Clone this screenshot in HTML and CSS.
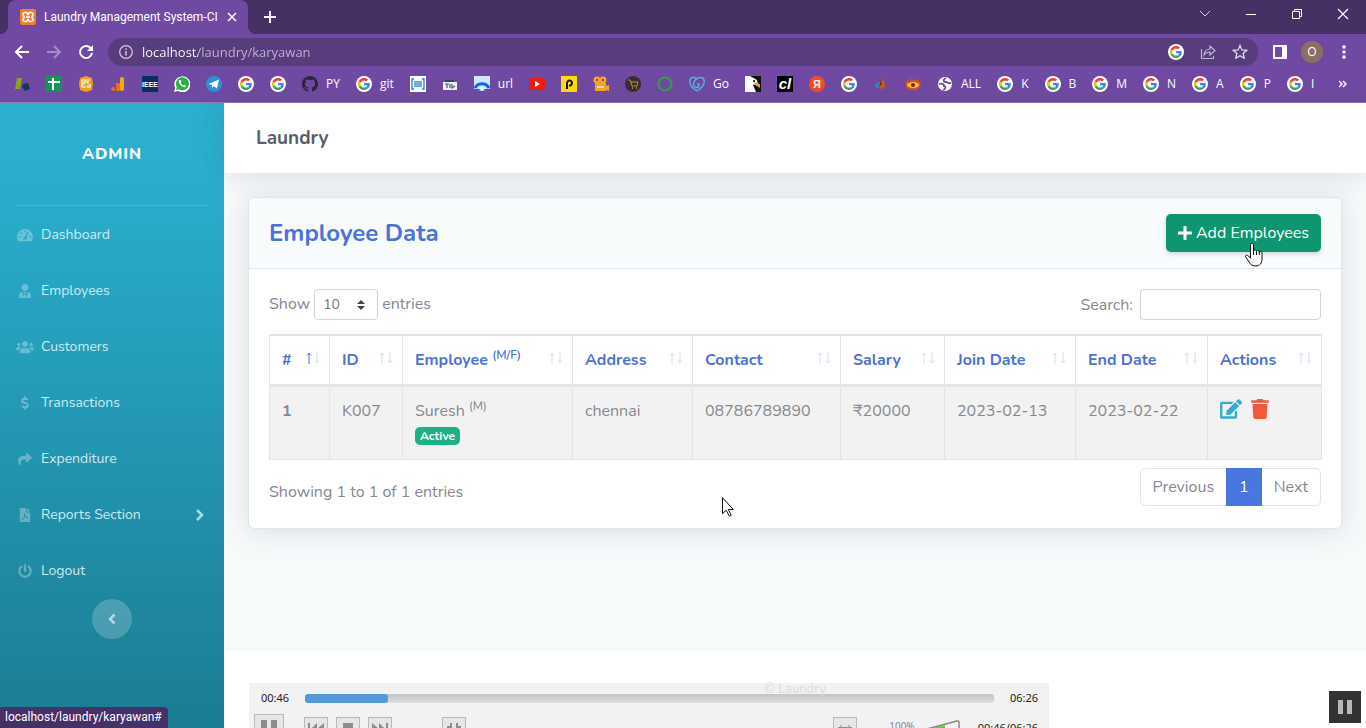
FILE: index.html
```html
<!DOCTYPE html>
<html lang="en">
<head>
    <meta charset="UTF-8">
    <meta name="viewport" content="width=device-width, initial-scale=1.0">
    <title>Laundry Management System-CI</title>
    <link rel="stylesheet" href="styles.css">
</head>
<body>
    <svg class="sprite" aria-hidden="true">
        <symbol id="google" viewBox="0 0 48 48">
            <circle cx="24" cy="24" r="24" fill="#fff"/>
            <g transform="translate(6 6) scale(.75)">
                <path fill="#ea4335" d="M24 9.5c3.54 0 6.71 1.22 9.21 3.6l6.85-6.85C35.9 2.38 30.47 0 24 0 14.62 0 6.51 5.38 2.56 13.22l7.98 6.19C12.43 13.72 17.74 9.5 24 9.5z"/>
                <path fill="#4285f4" d="M46.98 24.55c0-1.57-.15-3.09-.38-4.55H24v9.02h12.94c-.58 2.96-2.26 5.48-4.78 7.18l7.73 6c4.51-4.18 7.09-10.36 7.09-17.65z"/>
                <path fill="#fbbc05" d="M10.53 28.59c-.48-1.45-.76-2.99-.76-4.59s.27-3.14.76-4.59l-7.98-6.19C.92 16.46 0 20.12 0 24s.92 7.54 2.56 10.78l7.97-6.19z"/>
                <path fill="#34a853" d="M24 48c6.48 0 11.93-2.13 15.89-5.81l-7.73-6c-2.15 1.45-4.92 2.3-8.16 2.3-6.26 0-11.57-4.22-13.47-9.91l-7.98 6.19C6.51 42.62 14.62 48 24 48z"/>
            </g>
        </symbol>
        <symbol id="arrow-up" viewBox="0 0 6 12">
            <path d="M3 12V1M1 3.5L3 1l2 2.500" fill="none" stroke="currentColor"/>
        </symbol>
        <symbol id="arrow-down" viewBox="0 0 6 12">
            <path d="M3 0v11M1 8.500L3 11l2-2.500" fill="none" stroke="currentColor"/>
        </symbol>
    </svg>

    <header class="browser">
        <div class="tab-strip">
            <div class="tab">
                <svg class="icon16" viewBox="0 0 16 16"><rect width="16" height="16" rx="2" fill="#f37b27"/><path d="M5 3.500h1.500L8 5.500l1.500-2H11a2 2 0 0 1 2 2.500l-1.200 2 1.200 2a2 2 0 0 1-2 2.500H9.500L8 10.500l-1.500 2H5A2 2 0 0 1 3 10l1.200-2L3 6a2 2 0 0 1 2-2.500zM6 8h4" fill="none" stroke="#fff" stroke-width="1.700"/></svg>
                <span class="tab-title">Laundry Management System-CI</span>
                <button type="button" aria-label="Close tab"><svg width="10" height="10" viewBox="0 0 10 10"><path d="M1 1l8 8M9 1L1 9" stroke="#fff" stroke-width="1.500"/></svg></button>
            </div>
            <button type="button" class="new-tab" aria-label="New tab"><svg width="12" height="12" viewBox="0 0 12 12"><path d="M6 0v12M0 6h12" stroke="#fff" stroke-width="2"/></svg></button>
            <div class="window-buttons">
                <button type="button" aria-label="Search tabs"><svg width="12" height="12" viewBox="0 0 12 12"><path d="M1 3l5 5 5-5" fill="none" stroke="#d6cbe3"/></svg></button>
                <button type="button" aria-label="Minimize"><svg width="12" height="12" viewBox="0 0 12 12"><path d="M1 6.500h10" stroke="#fff"/></svg></button>
                <button type="button" aria-label="Restore"><svg width="12" height="12" viewBox="0 0 12 12"><path d="M1.500 3.500h7v7h-7zM3.500 3.500v-2h7v7h-2" fill="none" stroke="#fff"/></svg></button>
                <button type="button" aria-label="Close"><svg width="12" height="12" viewBox="0 0 12 12"><path d="M1 1l10 10M11 1L1 11" stroke="#fff" stroke-width="1.200"/></svg></button>
            </div>
        </div>

        <div class="toolbar">
            <button type="button" aria-label="Back"><svg class="icon16" viewBox="0 0 16 16"><path d="M15 8H2M8 2L2 8l6 6" fill="none" stroke="#fff" stroke-width="2"/></svg></button>
            <button type="button" aria-label="Forward"><svg class="icon16" viewBox="0 0 16 16"><path d="M1 8h13M8 2l6 6-6 6" fill="none" stroke="#a78cc9" stroke-width="2"/></svg></button>
            <button type="button" aria-label="Reload"><svg class="icon16" viewBox="0 0 16 16"><path d="M13 4.500A6 6 0 1 0 14 9" fill="none" stroke="#fff" stroke-width="2"/><path d="M15 1v6H9z" fill="#fff"/></svg></button>
            <div class="address-bar">
                <svg width="14" height="14" viewBox="0 0 14 14"><circle cx="7" cy="7" r="6.300" fill="none" stroke="#cfc4dc" stroke-width="1.300"/><path d="M7 6v4.500M7 3.300v1.500" stroke="#cfc4dc" stroke-width="1.500"/></svg>
                <input type="text" value="localhost/laundry/karyawan" aria-label="Address">
                <svg class="icon16"><use href="#google"/></svg>
                <svg class="icon16" viewBox="0 0 16 16"><path d="M1.500 5v9.500h12V12M4 11c.5-4 3-6 6-6V2l5 4.500-5 4.500V8c-3 0-4.500 1-6 3z" fill="none" stroke="#c3b4d5" stroke-width="1.200"/></svg>
                <svg class="icon16" viewBox="0 0 16 16"><path d="M8 1.500l1.900 4.400 4.800.4-3.600 3.200 1.100 4.700L8 11.700l-4.200 2.500 1.100-4.700L1.300 6.300l4.800-.4z" fill="none" stroke="#e3daec" stroke-width="1.300"/></svg>
            </div>
            <div class="toolbar-end">
                <button type="button" aria-label="Side panel"><svg width="14" height="14" viewBox="0 0 14 14"><path d="M0 0h14v14H0zM2 2v10h7V2z" fill="#fff" fill-rule="evenodd"/></svg></button>
                <button type="button" class="profile">O</button>
                <button type="button" aria-label="Menu"><svg width="4" height="14" viewBox="0 0 4 14"><path d="M.5.500h3v3h-3zM.5 5.500h3v3h-3zM.5 10.500h3v3h-3z" fill="#fff"/></svg></button>
            </div>
        </div>

        <nav class="bookmarks" aria-label="Bookmarks">
            <a href="#" aria-label="Bookmark"><svg class="icon16" viewBox="0 0 16 16"><path d="M3 2h5L6 13H1z" fill="#8aa51a"/><path d="M9 8l5-1 2 6-5 2-3-4z" fill="#12385c"/></svg></a>
            <a href="#" aria-label="Sheets"><svg class="icon16" viewBox="0 0 16 16"><path d="M0 0h16v16H0z" fill="#16935a"/><path d="M7 2v12M2 6h12" stroke="#fff" stroke-width="2"/></svg></a>
            <a href="#" aria-label="Analytics"><svg class="icon16" viewBox="0 0 16 16"><path d="M8 0l6 2 1 6-1 6-6 2-6-2-1-6 1-6z" fill="#f0a01e"/><path d="M11 5V4H4v7h4M6 9V6h4v2M10 12V9M12 12V8" fill="none" stroke="#fff" stroke-width="1.200"/></svg></a>
            <a href="#" aria-label="Statistics"><svg class="icon16" viewBox="0 0 16 16"><circle cx="3" cy="13" r="2" fill="#e8710a"/><rect x="6" y="7" width="4" height="8" rx="1" fill="#e8710a"/><rect x="10" y="1" width="4" height="14" rx="2" fill="#f9ab00"/></svg></a>
            <a href="#" aria-label="IEEE"><svg class="icon16" viewBox="0 0 16 16"><rect width="16" height="16" fill="#092d63"/><text x="8" y="11" text-anchor="middle" class="logo-ieee">IEEE</text></svg></a>
            <a href="#" aria-label="WhatsApp"><svg class="icon16" viewBox="0 0 16 16"><path d="M0 16l1.300-4A8 8 0 1 1 4 15z" fill="#fff"/><path d="M2 14l.8-3A6.500 6.500 0 1 1 5 13.300z" fill="#25b33f"/><path d="M5.200 4c-1 .8-.8 2 .4 3.800 1.300 2 3.300 3.500 4.700 3.500 1 0 2-.9 1.700-1.800L10.300 8.600l-1 1c-1-.4-2.200-1.500-2.600-2.600l.8-.9-.8-2z" fill="#fff"/></svg></a>
            <a href="#" aria-label="Telegram"><svg class="icon16" viewBox="0 0 16 16"><circle cx="8" cy="8" r="8" fill="#2f8ee0"/><path d="M2.500 8L13 3.500l-2 9-3.200-2.200-1.600 1.500-.4-2.800z" fill="#fff"/></svg></a>
            <a href="#" aria-label="Google"><svg class="icon16"><use href="#google"/></svg></a>
            <a href="#" aria-label="Google"><svg class="icon16"><use href="#google"/></svg></a>
            <a href="#"><svg class="icon16" viewBox="0 0 16 16"><path fill="#2a2340" d="M8 0C3.580 0 0 3.580 0 8c0 3.540 2.290 6.530 5.470 7.590.4.070.55-.17.55-.38v-1.490c-2.010.37-2.530-.49-2.690-.94-.09-.23-.48-.94-.82-1.130-.28-.15-.68-.52-.01-.53.63-.01 1.080.58 1.230.82.72 1.210 1.870.87 2.330.66.070-.52.280-.87.510-1.070-1.780-.2-3.640-.89-3.640-3.950 0-.87.310-1.590.820-2.150-.08-.2-.36-1.020.08-2.120 0 0 .67-.21 2.200.82a7.600 7.600 0 0 1 4 0c1.530-1.040 2.200-.82 2.200-.82.44 1.100.160 1.920.080 2.120.51.560.82 1.270.82 2.150 0 3.070-1.870 3.750-3.650 3.950.29.250.54.730.54 1.480v2.200c0 .21.150.46.550.38A8 8 0 0 0 8 0z"/></svg>PY</a>
            <a href="#"><svg class="icon16"><use href="#google"/></svg>git</a>
            <a href="#" aria-label="Barcode"><svg class="icon16" viewBox="0 0 16 16"><rect width="16" height="16" fill="#fff"/><path d="M4 3H2v10h2M12 3h2v10h-2M5 5v6M7 5v6M9 5v6M11 5v6" fill="none" stroke="#2680d4" stroke-width="1.300"/></svg></a>
            <a href="#" aria-label="Printer"><svg class="icon16" viewBox="0 0 16 16"><path d="M3 4h9v4H3z" fill="#35465f"/><path d="M1 6h14v8H1z" fill="#eef0f4"/><path d="M5 8v4M3 8h4M8 12V8M10 8v4l3-2" fill="none" stroke="#44617e" stroke-width="1.200"/></svg></a>
            <a href="#"><svg class="icon16" viewBox="0 0 16 16"><path d="M0 0h16v13H0z" fill="#cfe6fb"/><path d="M1 12a8 8 0 0 1 14 0" fill="none" stroke="#1769d8" stroke-width="3"/><path d="M4 15a5 5 0 0 1 8 0z" fill="#4b9af4"/><circle cx="8" cy="13" r="2" fill="#fff"/></svg>url</a>
            <a href="#" aria-label="YouTube"><svg class="icon16" viewBox="0 0 16 16"><rect y="2" width="16" height="12" rx="3" fill="#f51a0b"/><path d="M6 5l5 3-5 3z" fill="#fff"/></svg></a>
            <a href="#" aria-label="P"><svg class="icon16" viewBox="0 0 16 16"><path d="M0 0h16v16H0z" fill="#fd0"/><path d="M6 13V7a2.500 2.500 0 1 1 2 2.500" fill="none" stroke="#111" stroke-width="2"/></svg></a>
            <a href="#" aria-label="Camera"><svg class="icon16" viewBox="0 0 16 16"><circle cx="4" cy="4" r="3.500" fill="#f6a623"/><circle cx="10" cy="4" r="3.500" fill="#f6a623"/><path d="M2 7h11v3l3-1v6l-3-1v1H2z" fill="#f6a623"/><path d="M3 4h2M9 4h2" stroke="#704a98" stroke-width="2"/><path d="M4 11h7" stroke="#fbe3bd" stroke-width="2"/></svg></a>
            <a href="#" aria-label="Shop"><svg class="icon16" viewBox="0 0 16 16"><circle cx="8" cy="8" r="8" fill="#35302f"/><path d="M3 4h2l2 6h5l1-4H6" fill="none" stroke="#d68b22"/><path d="M7 12h1M11 12h1" stroke="#d68b22" stroke-width="1.500"/></svg></a>
            <a href="#" aria-label="Ring"><svg class="icon16" viewBox="0 0 16 16"><circle cx="8" cy="8" r="6.500" fill="none" stroke="#389b48" stroke-width="2.200"/></svg></a>
            <a href="#"><svg class="icon16" viewBox="0 0 16 16"><path d="M8 15C3 12 0 8 1 4s6-3 7 0M8 15c5-3 8-7 7-11s-8-3-10 2 3 7 5 4V8H8" fill="none" stroke="#57b7e6" stroke-width="1.400"/></svg>Go</a>
            <a href="#" aria-label="Eagle"><svg class="icon16" viewBox="0 0 16 16"><path d="M0 0h16v16H0z" fill="#111"/><path d="M0 0h5l7 4 1 4-5 1 3 7H0z" fill="#fff"/><path d="M9 6l6 2v4l-5-3z" fill="#e6a13b"/><circle cx="9" cy="5" r="1"/></svg></a>
            <a href="#" aria-label="cl"><svg class="icon16" viewBox="0 0 16 16"><path d="M0 0h16v16H0z"/><text x="8" y="13" text-anchor="middle" class="logo-cl">cl</text></svg></a>
            <a href="#" aria-label="Yandex"><svg class="icon16" viewBox="0 0 16 16"><circle cx="8" cy="8" r="8" fill="#f8492b"/><text x="8" y="12" text-anchor="middle" class="logo-ya">Я</text></svg></a>
            <a href="#" aria-label="Google"><svg class="icon16"><use href="#google"/></svg></a>
            <a href="#" aria-label="Matlab"><svg class="icon16" viewBox="0 0 16 16"><path d="M1 9l4-2 3-2-2 6-2 1z" fill="#3f80c0"/><path d="M9 2c2 1 3 7 4 11l-3-2-3 3-1-3z" fill="#d95319"/><path d="M9 2l-1 7-2 2z" fill="#4b2020"/></svg></a>
            <a href="#" aria-label="Eye"><svg class="icon16" viewBox="0 0 16 16"><path d="M0 5l2 1V3l3 2 1-3 2 3 2-3 1 3 3-2v3l2-1-1 6-4 3H5l-4-3z" fill="#e64a19"/><ellipse cx="8" cy="9" rx="6" ry="3" fill="#ffc928"/><circle cx="8" cy="9" r="2" fill="#5b2a1a"/></svg></a>
            <a href="#"><svg class="icon16" viewBox="0 0 16 16"><circle cx="8" cy="8" r="7" fill="#fff"/><path d="M9 2c-3 1-3 4 0 4 2 0 2 2 5 1M2 8c3-1 5 0 5 2 2 0 2 3-1 4" fill="none" stroke="#704a98" stroke-width="1.800"/></svg>ALL</a>
            <a href="#"><svg class="icon16"><use href="#google"/></svg>K</a>
            <a href="#"><svg class="icon16"><use href="#google"/></svg>B</a>
            <a href="#"><svg class="icon16"><use href="#google"/></svg>M</a>
            <a href="#"><svg class="icon16"><use href="#google"/></svg>N</a>
            <a href="#"><svg class="icon16"><use href="#google"/></svg>A</a>
            <a href="#"><svg class="icon16"><use href="#google"/></svg>P</a>
            <a href="#"><svg class="icon16"><use href="#google"/></svg>I</a>
            <button type="button" class="more" aria-label="More bookmarks"><svg width="8" height="8" viewBox="0 0 8 8"><path d="M0 1l3 3-3 3M4 1l3 3-3 3" fill="none" stroke="#fff" stroke-width="1.500"/></svg></button>
        </nav>
    </header>

    <div class="wrapper">
        <aside class="sidebar">
            <a class="brand" href="#">ADMIN</a>
            <nav class="menu">
                <a href="#"><svg viewBox="0 0 576 512"><path fill-rule="evenodd" d="M288 32C129 32 0 161 0 320c0 53 14 102 39 145 6 10 16 15 27 15h443c12 0 22-5 28-15 25-43 39-92 39-145 0-159-129-288-288-288zM256 96h64v48h-64zM64 304h64v56H64zM116 164h60v54h-60zM448 304h64v56h-64zM365 138l42 16-64 192c18 24 13 46 2 70H231c-24-54 0-91 62-96z"/></svg>Dashboard</a>
                <a href="#"><svg viewBox="0 0 448 512"><path d="M224 256c70.700 0 128-57.300 128-128S294.700 0 224 0 96 57.300 96 128s57.300 128 128 128zm95.800 32.600L272 480l-32-136 32-56h-96l32 56-32 136-47.800-191.400C56.900 292 0 350.300 0 422.400V464c0 26.500 21.500 48 48 48h352c26.500 0 48-21.500 48-48v-41.600c0-72.100-56.900-130.400-128.200-133.800z"/></svg>Employees</a>
                <a href="#"><svg viewBox="0 0 640 512"><path d="M96 224c35.300 0 64-28.700 64-64s-28.700-64-64-64-64 28.700-64 64 28.700 64 64 64zm448 0c35.300 0 64-28.700 64-64s-28.700-64-64-64-64 28.700-64 64 28.700 64 64 64zm32 32h-64c-17.600 0-33.500 7.100-45.100 18.600 40.300 22.100 68.900 62 75.100 109.400h66c17.700 0 32-14.300 32-32v-32c0-35.300-28.700-64-64-64zm-256 0c61.900 0 112-50.100 112-112S381.900 32 320 32 208 82.100 208 144s50.100 112 112 112zm76.800 32h-8.300c-20.800 10-43.900 16-68.500 16s-47.600-6-68.500-16h-8.300C179.600 288 128 339.600 128 403.200V432c0 26.500 21.500 48 48 48h288c26.500 0 48-21.500 48-48v-28.800c0-63.600-51.600-115.200-115.200-115.200zm-223.700-13.400C161.500 263.100 145.600 256 128 256H64c-35.300 0-64 28.700-64 64v32c0 17.700 14.300 32 32 32h65.900c6.300-47.400 34.900-87.300 75.200-109.400z"/></svg>Customers</a>
                <a href="#"><svg viewBox="0 0 288 512"><path d="M209.200 233.400l-108-31.600C88.700 198.200 80 186.500 80 173.500c0-16.300 13.200-29.500 29.500-29.500h66.300c12.200 0 24.200 3.700 34.200 10.500 6.100 4.100 14.300 3.100 19.500-2l34.800-34c7.100-6.900 6.100-18.400-1.800-24.500C238 74.800 207.400 64.100 176 64V16c0-8.800-7.200-16-16-16h-32c-8.800 0-16 7.200-16 16v48h-2.500C45.800 64-5.400 118.700.5 183.600c4.200 46.100 39.400 83.600 83.800 96.600l102.500 30c12.500 3.700 21.200 15.300 21.200 28.300 0 16.300-13.200 29.500-29.500 29.500h-66.300C100 368 88 364.300 78 357.500c-6.100-4.100-14.300-3.100-19.500 2l-34.800 34c-7.100 6.900-6.100 18.400 1.800 24.500 24.500 19.200 55.100 29.900 86.500 30v48c0 8.800 7.200 16 16 16h32c8.800 0 16-7.200 16-16v-48.200c46.600-.9 90.300-28.600 105.700-72.700 21.500-61.600-14.600-124.800-72.500-141.700z"/></svg>Transactions</a>
                <a href="#"><svg viewBox="0 0 512 512"><path d="M503.700 189.800L327.700 37.900C312.300 24.500 288 35.300 288 56v80C127.400 137.900 0 170.100 0 322.300c0 61.500 39.600 122.300 83.300 154.200 13.700 9.900 33.100-2.600 28.100-18.700C66.100 312.800 132.900 274.300 288 272.100V360c0 20.700 24.300 31.500 39.700 18.200l176-152c11.100-9.600 11.100-26.800 0-36.400z"/></svg>Expenditure</a>
                <a href="#"><svg viewBox="0 0 384 512"><path fill-rule="evenodd" d="M24 0h200v136c0 13 11 24 24 24h136v328c0 13-11 24-24 24H24c-13 0-24-11-24-24V24C0 11 11 0 24 0zm232 0h6l122 122v6H256zM176 190c-20 0-26 48-10 92-17 44-35 79-58 98-54 24-55 62-23 57 25-4 43-38 62-71 25-13 53-20 83-24 27 19 69 30 79 11 10-21-30-36-69-30-21-13-35-31-46-56 10-33 9-77-18-77zm4 120c9 14 18 22 29 31-17 2-31 6-48 12z"/></svg>Reports Section<svg class="angle" viewBox="0 0 8 12"><path d="M1 1l5 5-5 5" fill="none" stroke="#a9dbe6" stroke-width="2.500"/></svg></a>
                <a href="#"><svg viewBox="0 0 512 512"><path d="M400 54.100c63 45 104 118.600 104 201.900 0 136.800-110.800 247.700-247.500 248C120 504.300 8.200 393 8 256.400 7.900 173.100 48.900 99.300 111.800 54.200c11.700-8.300 28-4.800 35 7.700L162.600 90c5.900 10.500 3.100 23.800-6.600 31-41.500 30.800-68 79.600-68 134.900-.1 92.300 74.500 168.100 168 168.100 91.600 0 168.600-74.200 168-169.100-.3-51.800-24.700-101.800-68.100-134-9.700-7.200-12.400-20.500-6.500-30.900l15.800-28.100c7-12.400 23.200-16.100 34.800-7.800zM296 264V24c0-13.300-10.700-24-24-24h-32c-13.300 0-24 10.700-24 24v240c0 13.300 10.700 24 24 24h32c13.300 0 24-10.700 24-24z"/></svg>Logout</a>
            </nav>
            <button type="button" class="sidebar-toggle" aria-label="Collapse sidebar"><svg width="8" height="12" viewBox="0 0 8 12"><path d="M6.500 1.500L2 6l4.500 4.500" fill="none" stroke="#b4d8e0" stroke-width="2.500"/></svg></button>
        </aside>

        <div class="content-wrapper">
            <header class="topbar">
                <h1>Laundry</h1>
            </header>

            <main class="content">
                <section class="card">
                    <div class="card-header">
                        <h2>Employee Data</h2>
                        <button type="button" class="add-button"><svg width="14" height="14" viewBox="0 0 14 14"><path d="M7 1v12M1 7h12" stroke="#fff" stroke-width="3" stroke-linecap="round"/></svg>Add Employees</button>
                    </div>
                    <div class="card-body">
                        <div class="table-tools">
                            <label class="length">Show
                                <select name="length">
                                    <option>10</option>
                                    <option>25</option>
                                    <option>50</option>
                                </select>
                                entries
                            </label>
                            <label class="search">Search: <input type="search" name="search"></label>
                        </div>

                        <table>
                            <colgroup>
                                <col class="col-no"><col class="col-id"><col class="col-employee"><col class="col-address"><col class="col-contact"><col class="col-salary"><col class="col-join"><col class="col-end"><col class="col-actions">
                            </colgroup>
                            <thead>
                                <tr>
                                    <th><div>#<span class="sort sorted"><svg><use href="#arrow-up"/></svg><svg><use href="#arrow-down"/></svg></span></div></th>
                                    <th><div>ID<span class="sort"><svg><use href="#arrow-up"/></svg><svg><use href="#arrow-down"/></svg></span></div></th>
                                    <th><div><span>Employee <sup>(M/F)</sup></span><span class="sort"><svg><use href="#arrow-up"/></svg><svg><use href="#arrow-down"/></svg></span></div></th>
                                    <th><div>Address<span class="sort"><svg><use href="#arrow-up"/></svg><svg><use href="#arrow-down"/></svg></span></div></th>
                                    <th><div>Contact<span class="sort"><svg><use href="#arrow-up"/></svg><svg><use href="#arrow-down"/></svg></span></div></th>
                                    <th><div>Salary<span class="sort"><svg><use href="#arrow-up"/></svg><svg><use href="#arrow-down"/></svg></span></div></th>
                                    <th><div>Join Date<span class="sort"><svg><use href="#arrow-up"/></svg><svg><use href="#arrow-down"/></svg></span></div></th>
                                    <th><div>End Date<span class="sort"><svg><use href="#arrow-up"/></svg><svg><use href="#arrow-down"/></svg></span></div></th>
                                    <th><div>Actions<span class="sort"><svg><use href="#arrow-up"/></svg><svg><use href="#arrow-down"/></svg></span></div></th>
                                </tr>
                            </thead>
                            <tbody>
                                <tr>
                                    <td><b>1</b></td>
                                    <td>K007</td>
                                    <td>Suresh <sup>(M)</sup><br><span class="badge">Active</span></td>
                                    <td>chennai</td>
                                    <td>08786789890</td>
                                    <td>₹20000</td>
                                    <td>2023-02-13</td>
                                    <td>2023-02-22</td>
                                    <td>
                                        <div class="actions">
                                            <a href="#" class="edit" aria-label="Edit"><svg width="22" height="20" viewBox="0 0 576 512"><path d="M402.600 83.200l90.200 90.200c3.800 3.800 3.800 10 0 13.800L274.400 405.600l-92.800 10.300c-12.400 1.400-22.900-9.100-21.500-21.500l10.300-92.800L388.800 83.200c3.800-3.800 10-3.800 13.800 0zm162-22.900l-48.800-48.800c-15.200-15.200-39.900-15.200-55.200 0l-35.400 35.400c-3.800 3.800-3.800 10 0 13.800l90.200 90.200c3.800 3.800 10 3.800 13.800 0l35.400-35.400c15.200-15.300 15.200-40 0-55.200zM384 346.200V448H64V128h229.800c3.200 0 6.200-1.300 8.500-3.500l40-40c7.600-7.600 2.200-20.500-8.500-20.500H48C21.500 64 0 85.500 0 112v352c0 26.500 21.500 48 48 48h352c26.500 0 48-21.500 48-48V306.200c0-10.700-12.900-16-20.500-8.500l-40 40c-2.200 2.300-3.500 5.300-3.500 8.500z"/></svg></a>
                                            <a href="#" class="delete" aria-label="Delete"><svg width="18" height="20" viewBox="0 0 448 512"><path d="M432 32H312l-9.400-18.700A24 24 0 0 0 281.100 0H166.800a23.700 23.700 0 0 0-21.400 13.300L136 32H16A16 16 0 0 0 0 48v32a16 16 0 0 0 16 16h416a16 16 0 0 0 16-16V48a16 16 0 0 0-16-16zM53.200 467a48 48 0 0 0 47.900 45h245.800a48 48 0 0 0 47.900-45L416 128H32z"/></svg></a>
                                        </div>
                                    </td>
                                </tr>
                            </tbody>
                        </table>

                        <div class="table-footer">
                            <p>Showing 1 to 1 of 1 entries</p>
                            <nav class="pagination" aria-label="Pages">
                                <a href="#">Previous</a>
                                <a href="#" class="active">1</a>
                                <a href="#">Next</a>
                            </nav>
                        </div>
                    </div>
                </section>
            </main>

            <footer class="footer">
                <span>© Laundry</span>
            </footer>

            <!-- video player controls floating over the page -->
            <div class="player">
                <div class="player-time">
                    <span>00:46</span>
                    <div class="track"><div class="track-fill"></div></div>
                    <span>06:26</span>
                </div>
                <div class="player-buttons">
                    <button type="button" class="play" aria-label="Pause"><svg width="16" height="16" viewBox="0 0 16 16"><path d="M0 0h6v16H0zM10 0h6v16h-6z"/></svg></button>
                    <button type="button" aria-label="Previous"><svg width="16" height="12" viewBox="0 0 16 12"><path d="M0 0h2v12H0zM9 0v12L3 6zM16 0v12l-7-6z"/></svg></button>
                    <button type="button" aria-label="Stop"><svg width="16" height="12" viewBox="0 0 16 12"><path d="M3 0h10v12H3z"/></svg></button>
                    <button type="button" aria-label="Next"><svg width="16" height="12" viewBox="0 0 16 12"><path d="M14 0h2v12h-2zM7 0v12l6-6zM0 0v12l7-6z"/></svg></button>
                    <button type="button" class="fullscreen" aria-label="Exit fullscreen"><svg width="14" height="14" viewBox="0 0 14 14"><path d="M3 0h2v5H0V3h3zM9 0h2v3h3v2H9zM0 9h5v5H3v-3H0zM9 9h5v2h-3v3H9z"/></svg></button>
                    <button type="button" class="settings" aria-label="Settings"><svg width="14" height="12" viewBox="0 0 14 12"><path d="M0 4.500h14M3 2v5M11 2v5" stroke="#8c8c8c"/></svg></button>
                    <span class="volume-text">100%</span>
                    <svg class="volume" width="37" height="16" viewBox="0 0 37 16"><path d="M10 8l12-3v11H10z" fill="#6c3"/><path d="M0 10L34 1q2-.5 2 1.500V16" fill="none" stroke="#888" stroke-width="1.500"/></svg>
                    <span class="elapsed">00:46/06:26</span>
                </div>
            </div>
        </div>
    </div>

    <div class="status-url">localhost/laundry/karyawan#</div>
    <button type="button" class="recorder" aria-label="Pause recording"><svg width="14" height="14" viewBox="0 0 14 14"><path d="M0 0h5v14H0zM9 0h5v14H9z" fill="#b9b9b9"/></svg></button>
    <svg class="pointer-arrow" width="12" height="20" viewBox="0 0 12 20"><path d="M.5.700v16l3.700-3.500 3.100 6 2-1-3-5.700h5z" fill="#fff" stroke="#111"/></svg>
    <svg class="pointer-hand" width="18" height="24" viewBox="0 0 18 24"><path d="M5.500 15V2c0-2 3-2 3 0v6c0-1.500 3-1.500 3 .5 0-1.500 2.800-1.300 2.800.7 0-1.300 2.700-1 2.700.8v6c0 4-2 7-6.500 7-4 0-5.500-2-7-5L.7 14c-.8-1.500 1-2.500 2.300-1.200zM8.500 8v4M11.500 8.500V12M14.300 9v3" fill="#fff" stroke="#111"/></svg>
</body>
</html>
```
FILE: styles.css
```css
:root {
    --primary: #4a72d8;
    --success: #1cb287;
    --text: #86888f;
    --border: #e3e5ea;
    --chrome: #704aa2;
    --chrome-dark: #463064;
}

* {
    box-sizing: border-box;
}

body {
    margin: 0;
    height: 100vh;
    display: flex;
    flex-direction: column;
    overflow: hidden;
    font-family: Nunito, Lato, sans-serif;
    font-size: 16px;
    line-height: 24px;
    color: var(--text);
    background-color: #fff;
}

a {
    color: inherit;
    text-decoration: none;
}

button {
    padding: 0;
    border: none;
    background: none;
    font: inherit;
    color: inherit;
    cursor: pointer;
}

svg {
    flex-shrink: 0;
}

.sprite {
    position: absolute;
    width: 0;
    height: 0;
}

.icon16 {
    width: 16px;
    height: 16px;
}

/* Browser */
.browser {
    flex-shrink: 0;
    background-color: var(--chrome);
    border-bottom: 1px solid #8e78b0;
    font-family: "Segoe UI", "Open Sans", sans-serif;
    font-size: 12px;
    line-height: 16px;
    color: #fff;
}

.browser button {
    display: flex;
    align-items: center;
    justify-content: center;
}

.tab-strip {
    display: flex;
    height: 34px;
    padding-left: 8px;
    background-color: var(--chrome-dark);
}

.tab {
    position: relative;
    display: flex;
    align-items: center;
    width: 240px;
    padding: 0 11px 0 12px;
    gap: 8px;
    border-radius: 8px 8px 0 0;
    background-color: var(--chrome);
}

.tab::before,
.tab::after {
    content: "";
    position: absolute;
    bottom: 0;
    width: 8px;
    height: 8px;
}

.tab::before {
    left: -8px;
    background: radial-gradient(circle at 0 0, transparent 8px, var(--chrome) 8px);
}

.tab::after {
    right: -8px;
    background: radial-gradient(circle at 100% 0, transparent 8px, var(--chrome) 8px);
}

.tab-title {
    flex: 1;
    font-family: "Segoe UI", Roboto, sans-serif;
    white-space: nowrap;
}

.new-tab {
    width: 44px;
}

.window-buttons {
    display: flex;
    margin-left: auto;
    height: 28px;
}

.window-buttons button {
    width: 46px;
}

.toolbar {
    display: flex;
    align-items: center;
    height: 36px;
    padding: 0 15px 0 6px;
}

.toolbar > button {
    width: 32px;
}

.address-bar {
    flex: 1;
    display: flex;
    align-items: center;
    height: 28px;
    margin-left: 6px;
    padding: 0 10px 0 11px;
    border-radius: 14px;
    background-color: #573d7c;
    gap: 16px;
}

.address-bar input {
    flex: 1;
    min-width: 0;
    margin-left: -7px;
    padding: 0;
    border: none;
    outline: none;
    font-family: inherit;
    font-size: 13px;
    color: transparent;
    background: linear-gradient(90deg, #fff 56px, #c3b4d5 56px);
    background-clip: text;
}

.toolbar-end {
    display: flex;
    align-items: center;
    margin-left: 15px;
    gap: 14px;
}

.toolbar-end button {
    min-width: 14px;
}

.toolbar-end .profile {
    width: 22px;
    height: 22px;
    border-radius: 50%;
    background-color: #8d6e63;
}

.bookmarks {
    display: flex;
    align-items: center;
    height: 32px;
    padding: 0 19px 4px 6px;
}

.bookmarks a {
    display: flex;
    align-items: center;
    gap: 8px;
    padding: 0 8px;
}

.more {
    margin-left: auto;
}

.logo-ieee {
    font: bold 7px "Liberation Sans", sans-serif;
    fill: #fff;
}

.logo-cl {
    font: italic bold 15px "Liberation Sans", sans-serif;
    fill: #fff;
}

.logo-ya {
    font: bold 11px "Liberation Sans", sans-serif;
    fill: #fff;
}

/* Sidebar */
.wrapper {
    flex: 1;
    display: flex;
    min-height: 0;
}

.sidebar {
    width: 224px;
    flex-shrink: 0;
    display: flex;
    flex-direction: column;
    align-items: center;
    background: linear-gradient(180deg, #2aafcf 10%, #1b7c92 100%);
    font-size: 14px;
}

.brand {
    height: 102px;
    display: flex;
    align-items: center;
    font-size: 16px;
    font-weight: 800;
    letter-spacing: 1px;
    color: #fff;
}

.menu {
    align-self: stretch;
    display: flex;
    flex-direction: column;
}

.menu::before {
    content: "";
    margin: 0 16px 1px;
    border-top: 1px solid rgba(255, 255, 255, 0.15);
}

.menu a {
    display: flex;
    align-items: center;
    gap: 7px;
    padding: 16px;
    color: #cdebf2;
}

.menu svg {
    width: 18px;
    height: 14px;
    fill: rgba(255, 255, 255, 0.3);
}

.menu .angle {
    width: 8px;
    height: 12px;
    margin: 0 4px 0 auto;
}

.sidebar-toggle {
    display: flex;
    align-items: center;
    justify-content: center;
    width: 40px;
    height: 40px;
    border-radius: 50%;
    background-color: rgba(255, 255, 255, 0.2);
}

/* Content */
.content-wrapper {
    position: relative;
    flex: 1;
    min-width: 0;
    display: flex;
    flex-direction: column;
    background-color: #f7fafb;
}

.topbar {
    position: relative;
    display: flex;
    align-items: center;
    height: 70px;
    padding: 0 32px;
    background-color: #fff;
    box-shadow: 0 2px 28px rgba(58, 59, 69, 0.15);
}

.topbar h1 {
    margin: 0;
    font-size: 19px;
    font-weight: 700;
    color: #5a5c66;
}

.content {
    flex: 1;
    padding: 24px;
}

.card {
    border: 1px solid var(--border);
    border-radius: 6px;
    background-color: #fff;
    box-shadow: 0 2px 28px rgba(58, 59, 69, 0.15);
}

.card-header {
    display: flex;
    align-items: center;
    justify-content: space-between;
    padding: 16px 20px;
    border-bottom: 1px solid var(--border);
    border-radius: 6px 6px 0 0;
    background-color: #f7fbfc;
}

.card-header h2 {
    margin: 0;
    font-size: 24px;
    font-weight: 700;
    color: var(--primary);
}

.add-button {
    display: flex;
    align-items: center;
    gap: 4px;
    height: 38px;
    padding: 0 12px;
    border-radius: 5px;
    background-color: #0d9670;
    box-shadow: 0 2px 4px rgba(58, 59, 69, 0.2);
    color: #fff;
}

.card-body {
    padding: 20px 20px 22px;
}

.table-tools {
    display: flex;
    justify-content: space-between;
    margin-bottom: 14px;
}

.table-tools label {
    display: flex;
    align-items: center;
}

.table-tools .length {
    align-items: baseline;
    gap: 4px;
}

.search {
    gap: 7px;
}

.table-tools select,
.table-tools input {
    height: 31px;
    border: 1px solid #d2d4da;
    border-radius: 4px;
    background-color: #fff;
    font-family: inherit;
    font-size: 14px;
    color: #76787f;
}

.table-tools select {
    appearance: none;
    width: 64px;
    padding: 0 8px;
    background: #fff url("data:image/svg+xml,%3Csvg xmlns='http://www.w3.org/2000/svg' viewBox='0 0 8 10'%3E%3Cpath fill='%23444' d='M4 0L0 4h8zM0 6h8l-4 4z'/%3E%3C/svg%3E") no-repeat right 12px center / 8px 10px;
}

.table-tools input {
    width: 181px;
    padding: 0 8px;
}

table {
    width: 100%;
    table-layout: fixed;
    border-collapse: collapse;
    border: 1px solid var(--border);
}

.col-no { width: 60px; }
.col-id { width: 73px; }
.col-employee { width: 170px; }
.col-address { width: 120px; }
.col-contact { width: 148px; }
.col-salary { width: 104px; }
.col-join { width: 131px; }
.col-end { width: 132px; }
.col-actions { width: 114px; }

th,
td {
    padding: 12px;
    border: 1px solid var(--border);
    text-align: left;
    vertical-align: top;
}

th {
    border-top-width: 2px;
    border-bottom-width: 3px;
    font-weight: 700;
    color: var(--primary);
}

th div {
    display: flex;
    align-items: center;
    justify-content: space-between;
    margin-right: -3px;
    white-space: nowrap;
}

sup {
    font-size: 12px;
    line-height: 0;
}

th sup {
    font-weight: 600;
}

.sort {
    display: flex;
    gap: 2px;
    margin-bottom: 4px;
    color: #d5dcf5;
}

.sort svg {
    width: 6px;
    height: 12px;
}

.sorted svg:first-child {
    color: var(--primary);
}

tbody tr {
    height: 73px;
    background-color: #f2f2f2;
}

.badge {
    display: inline-block;
    padding: 0 5px;
    border-radius: 5px;
    background-color: var(--success);
    font-size: 12px;
    line-height: 18px;
    font-weight: 700;
    color: #fff;
}

.actions {
    display: flex;
    gap: 9px;
}

.actions svg {
    display: block;
}

.edit {
    fill: #36aecb;
}

.delete {
    fill: #f2583a;
}

.table-footer {
    display: flex;
    justify-content: space-between;
    padding-top: 8px;
}

.table-footer p {
    margin: 12px 0 0;
}

.pagination {
    display: flex;
    border: 1px solid var(--border);
    border-radius: 5px;
}

.pagination a {
    padding: 6px 12px;
}

.pagination .active {
    margin: -1px 0;
    padding: 7px 13px;
    background-color: #4a76e0;
    color: #fff;
}

.footer {
    padding: 32px;
    background-color: #fff;
    text-align: center;
    font-size: 13px;
    line-height: 13px;
    color: #dcdcdc;
}

.footer span {
    position: relative;
    z-index: 2;
}

/* Player */
.player {
    position: absolute;
    left: 25px;
    bottom: 0;
    width: 800px;
    height: 45px;
    overflow: hidden;
    background-color: #f2f2f2;
    font-family: "Noto Sans", sans-serif;
    font-size: 11px;
    line-height: 14px;
    color: #222;
}

.player-time {
    display: flex;
    align-items: center;
    gap: 16px;
    padding: 8px 11px 0 12px;
}

.track {
    flex: 1;
    height: 9px;
    border-radius: 3px;
    background: linear-gradient(#c4c4c4, #dedede);
}

.track-fill {
    width: 12%;
    height: 100%;
    border-radius: 3px;
    background-color: #529adb;
}

.player-buttons {
    display: flex;
    align-items: flex-start;
    gap: 8px;
    padding: 12px 11px 0 5px;
}

.player-buttons button {
    display: flex;
    align-items: flex-start;
    justify-content: center;
    width: 24px;
    height: 24px;
    padding-top: 5px;
    border: 1px solid #b9b9b9;
    background-color: #e6e6e6;
}

.player-buttons button svg {
    fill: #8c8c8c;
}

.player-buttons .play {
    width: 30px;
    height: 30px;
    margin: -3px 12px 0 0;
}

.player-buttons .fullscreen {
    margin-left: 42px;
}

.player-buttons .settings {
    margin-left: auto;
}

.volume-text {
    margin: 2px 0 0 24px;
    font-size: 10px;
    color: #888;
}

.volume {
    margin-top: 3px;
}

.elapsed {
    margin: 4px 0 0 10px;
}

/* Overlays */
.status-url {
    position: absolute;
    left: 0;
    bottom: 0;
    padding: 2px 6px 2px 5px;
    border-radius: 0 4px 0 0;
    background-color: #46306a;
    font-family: "Segoe UI", Roboto, sans-serif;
    font-size: 12px;
    line-height: 17px;
    color: #fff;
}

.recorder {
    position: absolute;
    right: 5px;
    bottom: 5px;
    width: 32px;
    height: 32px;
    background-color: #333;
    line-height: 0;
}

.pointer-arrow {
    position: absolute;
    left: 722px;
    top: 497px;
}

.pointer-hand {
    position: absolute;
    left: 1245px;
    top: 243px;
}
```
